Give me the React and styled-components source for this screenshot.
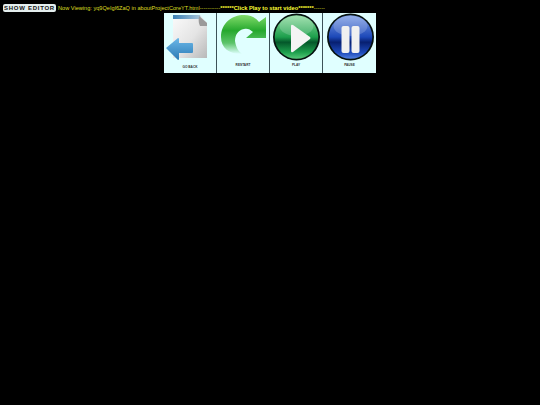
import React from 'react';
import styled, { createGlobalStyle } from 'styled-components';

const Global = createGlobalStyle`
  html, body { margin: 0; padding: 0; background: #000; }
  body { width: 540px; height: 405px; overflow: hidden; font-family: "Liberation Sans", Arial, sans-serif; }
`;

const TopBar = styled.div`
  display: flex;
  align-items: center;
  height: 13px;
  padding: 2px 0 0 3px;
  box-sizing: border-box;
  white-space: nowrap;
`;

const EditorButton = styled.button`
  width: 53px;
  height: 8px;
  margin: 0 2px 0 0;
  padding: 0;
  border: 0;
  border-radius: 2px;
  background: #e4eeee;
  color: #111;
  font: bold 6px "Liberation Sans", Arial, sans-serif;
  letter-spacing: 0.72px;
  line-height: 8px;
  text-align: center;
`;

const Status = styled.span`
  color: #dede20;
  font-size: 5.62px;
  line-height: 8px;
  b { color: #ffff33; font-weight: bold; font-size: 5.72px; }
`;

const Controls = styled.div`
  display: flex;
  width: fit-content;
  margin: 0 auto;
  gap: 1px;
  background: #3d5258;
`;

const Card = styled.div`
  width: ${p => p.$w || 52}px;
  height: 60px;
  background: #e0ffff;
  display: flex;
  flex-direction: column;
  align-items: center;
  overflow: hidden;
`;

const Art = styled.svg`
  display: block;
  width: 52px;
  height: 50px;
  flex: none;
`;

const Label = styled.div`
  margin-top: ${p => p.$top || 0}px;
  font-size: 3.2px;
  font-weight: bold;
  color: #333;
  line-height: 5px;
  text-transform: uppercase;
`;

const BackArt = () => (
  <Art viewBox="0 0 52 50">
    <defs>
      <linearGradient id="paper" x1="0" y1="0" x2="1" y2="1">
        <stop offset="0" stopColor="#fbfbfb" />
        <stop offset="0.55" stopColor="#e4e4e4" />
        <stop offset="1" stopColor="#b8b8b8" />
      </linearGradient>
      <linearGradient id="top" x1="0" y1="0" x2="1" y2="0">
        <stop offset="0" stopColor="#3a80b5" />
        <stop offset="1" stopColor="#a9c6da" />
      </linearGradient>
      <linearGradient id="arrow" x1="0" y1="0" x2="0" y2="1">
        <stop offset="0" stopColor="#6cb8e8" />
        <stop offset="1" stopColor="#2b7ab5" />
      </linearGradient>
    </defs>
    <path d="M9 2H36L43 10V45H9Z" fill="url(#paper)" />
    <path d="M9 2H36L37 6H9Z" fill="url(#top)" />
    <path d="M35 3L43 10V13H36Q34 9 35 3Z" fill="#9a9a9a" />
    <path d="M2 35L14 25Q15 25 15 26V30H28Q29 30 29 31V39Q29 40 28 40H15V46Q15 47 14 47Z" fill="url(#arrow)" />
  </Art>
);

const RestartArt = () => (
  <Art viewBox="0 0 52 50">
    <defs>
      <linearGradient id="swirl" x1="0" y1="0" x2="0" y2="1">
        <stop offset="0" stopColor="#82dc6a" />
        <stop offset="0.4" stopColor="#25a82e" />
        <stop offset="0.72" stopColor="#5cc46a" />
        <stop offset="1" stopColor="#e0ffff" />
      </linearGradient>
    </defs>
    <path d="M4 24C4 10 15 2 27 2C34 2 39 5 42 9L49 4V25H29L36 19C33 16 30 15 27 16C21 17 18 22 18 28C19 34 21 38 25 41C12 41 4 35 4 24Z" fill="url(#swirl)" />
  </Art>
);

const Orb = ({ id, light, mid, dark, glow, children }) => (
  <Art viewBox="0 0 52 50">
    <defs>
      <linearGradient id={id} x1="0" y1="0" x2="0" y2="1">
        <stop offset="0" stopColor={light} />
        <stop offset="0.5" stopColor={mid} />
        <stop offset="0.62" stopColor={dark} />
        <stop offset="0.85" stopColor={mid} />
        <stop offset="1" stopColor={glow} />
      </linearGradient>
    </defs>
    <circle cx="26.5" cy="24" r="23.5" fill="#06120f" />
    <circle cx="26.5" cy="24" r="21.8" fill={`url(#${id})`} />
    <ellipse cx="26.5" cy="13" rx="17" ry="10" fill="#fff" opacity="0.18" />
    {children}
  </Art>
);

export default function App() {
  return (
    <>
      <Global />
      <TopBar>
        <EditorButton>SHOW EDITOR</EditorButton>
        <Status>
          Now Viewing: yq9QeIgl6ZaQ in aboutProjectCoreYT.html-----------<b>******Click Play to start video*******</b>------
        </Status>
      </TopBar>
      <Controls>
        <Card>
          <BackArt />
          <Label $top={2}>Go Back</Label>
        </Card>
        <Card>
          <RestartArt />
          <Label>Restart</Label>
        </Card>
        <Card>
          <Orb id="green" light="#8fdca0" mid="#1d9f4c" dark="#04572a" glow="#55c878">
            <path d="M21 13Q21 11 23 12L40 24Q41 25 40 26L23 39Q21 40 21 38Z" fill="#f4f4f4" />
          </Orb>
          <Label>Play</Label>
        </Card>
        <Card $w={53}>
          <Orb id="blue" light="#7f9fe6" mid="#1c48b8" dark="#071f70" glow="#4f7fe0">
            <rect x="17.5" y="13" width="8" height="27" rx="2" fill="#f0f0f0" />
            <rect x="27.5" y="13" width="8" height="27" rx="2" fill="#f0f0f0" />
          </Orb>
          <Label>Pause</Label>
        </Card>
      </Controls>
    </>
  );
}
